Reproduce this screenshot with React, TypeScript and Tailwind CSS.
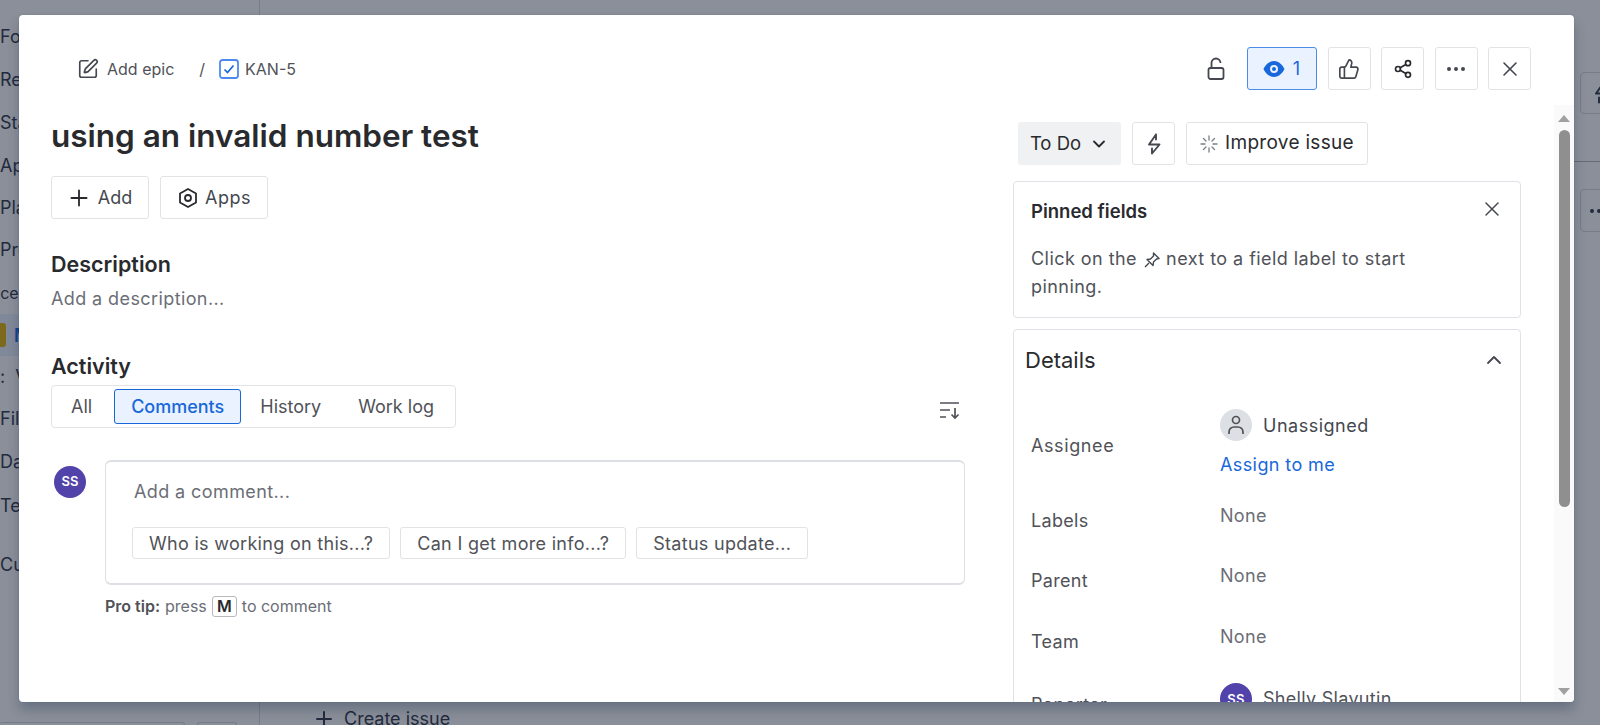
import { ChevronDown, ChevronUp, Ellipsis, Plus, Share2, SquarePen, ThumbsUp, X } from "lucide-react";
import type { ReactNode } from "react";

const sidebarItems = [
  { label: "For you", className: "mt-[15px] h-[43px]" },
  { label: "Recent", className: "h-[43px]" },
  { label: "Starred", className: "h-[43px]" },
  { label: "Apps", className: "h-[42px]" },
  { label: "Plans", className: "h-[42px]" },
  { label: "Projects", className: "h-[43px]" },
];

const sidebarLower = [
  { label: "Filters", className: "h-[44px]" },
  { label: "Dashboards", className: "h-[43px]" },
  { label: "Teams", className: "h-[44px] mb-[16px]" },
  { label: "Customize sidebar", className: "h-[42px]" },
];

const detailRows = [
  { label: "Labels", className: "h-[60px]" },
  { label: "Parent", className: "h-[61px]" },
  { label: "Team", className: "h-[62px]" },
];

function Bolt({ className }: { className: string }) {
  return (
    <svg className={className} width="24" height="24" viewBox="0 0 24 24" fill="none" stroke="currentColor" strokeWidth="1.9" strokeLinejoin="round" strokeLinecap="round">
      <path d="M14 2.500 7 12.500h10.500L10 21.500M14 2.500V7.500M10 21.500V16.500" />
    </svg>
  );
}

function IconButton({ children }: { children: ReactNode }) {
  return (
    <button className="flex h-[43px] w-[43px] items-center justify-center rounded-[3px] border border-[#e2e3e6] bg-white text-[#44474f]">
      {children}
    </button>
  );
}

function Chip({ label }: { label: string }) {
  return (
    <button className="flex h-[32px] items-center rounded-[3px] border border-[#e2e3e6] bg-white px-4 text-[18px] tracking-[0.3px] text-[#505258]">
      {label}
    </button>
  );
}

function Avatar({ className }: { className: string }) {
  return (
    <div className={`flex h-8 w-8 shrink-0 items-center justify-center rounded-full bg-[#5243aa] text-[13px] font-semibold text-white ${className}`}>
      SS
    </div>
  );
}

function PageBehind() {
  return (
    <div className="flex h-full bg-white text-[#2c3448]">
      <div className="flex w-[260px] shrink-0 flex-col overflow-hidden border-r border-[#d5d8de] text-[18px]">
        {sidebarItems.map((item) => (
          <div key={item.label} className={`flex items-center ${item.className}`}>
            {item.label}
          </div>
        ))}
        <div className="-ml-[29px] flex h-[43px] items-center text-[16px]">Spaces</div>
        <div className="flex h-[42px] items-center gap-2 bg-[#e9f2fe]">
          <div className="h-6 w-[6px] rounded-r-[3px] bg-[#e2b203]" />
          <span className="font-semibold text-[#0c66e4]">My project</span>
        </div>
        <div className="flex h-[40px] items-center gap-[10px]">
          <span>:</span>
          View all
        </div>
        {sidebarLower.map((item) => (
          <div key={item.label} className={`flex items-center ${item.className}`}>
            {item.label}
          </div>
        ))}
        <div className="mt-auto flex h-[3px] gap-3 pr-[22px]">
          <div className="w-[185px] rounded-t-[3px] border-t border-r border-[#d5d8de]" />
          <div className="grow rounded-t-[3px] border-x border-t border-[#d5d8de]" />
        </div>
      </div>
      <div className="flex grow flex-col items-end">
        <div className="mt-[72px] -mr-[22px] h-[42px] w-[42px] rounded-[4px] border border-[#d5d8de] pt-[8px] pl-[8px]">
          <Bolt className="h-6 w-6" />
        </div>
        <div className="mt-[47px] h-px w-[30px] bg-[#b0b4bd]" />
        <div className="mt-[27px] -mr-[22px] h-[43px] w-[42px] rounded-[4px] border border-[#d5d8de] pt-[9px] pl-[6px]">
          <Ellipsis className="h-6 w-6" />
        </div>
        <div className="mt-auto -mb-[8px] ml-[52px] flex h-[29px] items-center gap-2 self-start text-[18px] whitespace-nowrap text-[#2c3448]">
          <Plus className="h-6 w-6" />
          Create issue
        </div>
      </div>
    </div>
  );
}

function LeftColumn() {
  return (
    <div className="w-[946px] shrink-0 pl-8">
      <h1 className="mt-[25px] text-[31.5px] leading-[42px] font-semibold text-[#292a2e]">using an invalid number test</h1>
      <div className="mt-[19px] flex gap-[11px]">
        <button className="flex h-[43px] w-[98px] items-center justify-center gap-[6px] rounded-[3px] border border-[#e2e3e6] pr-[2px] text-[18px] text-[#44474f]">
          <Plus className="h-[26px] w-[26px] text-[#292a2e]" strokeWidth={1.7} />
          Add
        </button>
        <button className="flex h-[43px] w-[108px] items-center justify-center gap-[6px] rounded-[3px] border border-[#e2e3e6] text-[18px] tracking-[0.5px] text-[#44474f]">
          <svg width="22" height="22" viewBox="0 0 22 22" fill="none" stroke="#292a2e" strokeWidth="1.8">
            <path d="M11 2l8 4.500v9L11 20l-8-4.500v-9z" strokeLinejoin="round" />
            <circle cx="11" cy="11" r="3" />
          </svg>
          Apps
        </button>
      </div>
      <h2 className="mt-[31px] text-[21.500px] leading-7 font-semibold text-[#292a2e]">Description</h2>
      <p className="mt-[9px] text-[18px] leading-6 tracking-[0.4px] text-[#6b6e76]">Add a description...</p>
      <h2 className="mt-[41px] text-[21.500px] leading-7 font-semibold text-[#292a2e]">Activity</h2>
      <div className="flex items-center justify-between">
        <div className="mt-[5px] flex h-[43px] w-[405px] items-center gap-[4px] rounded-[4px] border border-[#e2e3e6] pl-[4px] text-[18px] text-[#505258]">
          <span className="pr-[18px] pl-[15px]">All</span>
          <span className="flex h-[35px] items-center rounded-[3px] border border-[#1868db] bg-[#e9f2fe] px-4 font-medium text-[#1868db]">Comments</span>
          <span className="px-[15px]">History</span>
          <span className="px-[18px]">Work log</span>
        </div>
        <svg className="mt-[14px] mr-[5px]" width="20" height="18" viewBox="0 0 20 18" fill="none" stroke="#505258" strokeWidth="1.700">
          <path d="M0 1h19M0 8h10M0 15h6M15 6v10M11.500 12.500 15 16l3.500-3.500" />
        </svg>
      </div>
      <div className="mt-[32px] flex">
        <Avatar className="mt-[6px] ml-[3px]" />
        <div className="ml-[19px] grow">
          <div className="h-[125px] rounded-[6px] border-x border-y-2 border-[#dcdfe4] pt-[18px] pl-[26px]">
            <p className="pl-[2px] text-[18px] leading-6 tracking-[0.4px] text-[#6b6e76]">Add a comment...</p>
            <div className="mt-[23px] flex gap-[10px]">
              <Chip label="Who is working on this...?" />
              <Chip label="Can I get more info...?" />
              <Chip label="Status update..." />
            </div>
          </div>
          <p className="mt-[9px] flex items-center text-[16px] text-[#6b6e76]">
            <span className="mr-[5px] font-semibold text-[#505258]">Pro tip:</span>
            press
            <span className="mx-[5px] flex h-[21px] w-[25px] items-center justify-center rounded-[3px] border border-[#b7b9be] font-semibold text-[#292a2e]">M</span>
            to comment
          </p>
        </div>
      </div>
    </div>
  );
}

function RightColumn() {
  return (
    <div className="ml-[48px] w-[508px] shrink-0">
      <div className="mt-[32px] flex pl-[5px]">
        <button className="flex h-[43px] w-[103px] items-center justify-center gap-2 rounded-[3px] bg-[#f0f1f2] text-[18.500px] text-[#292a2e]">
          To Do
          <ChevronDown className="h-5 w-5" strokeWidth={2.200} />
        </button>
        <button className="ml-[11px] flex h-[43px] w-[43px] items-center justify-center rounded-[3px] border border-[#e2e3e6] text-[#44474f]">
          <Bolt className="h-6 w-6" />
        </button>
        <button className="ml-[11px] flex h-[43px] w-[182px] items-center justify-center gap-[7px] rounded-[3px] border border-[#e2e3e6] text-[19px] tracking-[0.3px] text-[#292a2e]">
          <svg width="18" height="18" viewBox="0 0 18 18" stroke="#7a7d85" strokeWidth="1.300" strokeLinecap="round">
            <path d="M9 1v4M9 13v4M1 9h4M13 9h4M3.500 3.500l2.500 2.500M12 12l2.500 2.500M14.500 3.500 12 6M6 12l-2.500 2.500" />
          </svg>
          Improve issue
        </button>
      </div>
      <div className="mt-[16px] h-[137px] rounded-[4px] border border-[#dfe1e6] pt-[15px] pr-[16px] pl-[17px]">
        <div className="flex items-start justify-between">
          <h3 className="pt-[2px] text-[18.500px] leading-6 font-semibold text-[#292a2e]">Pinned fields</h3>
          <X className="h-6 w-6 text-[#44474f]" strokeWidth={1.500} />
        </div>
        <p className="mt-[22px] text-[18px] leading-[28px] tracking-[0.45px] text-[#505258]">
          Click on the{" "}
          <svg className="inline" width="18" height="18" viewBox="0 0 18 18" fill="none" stroke="#44474f" strokeWidth="1.400">
            <path d="M10.500 2 16 7.500l-2.500.5-3 3-.5 3.500-6-6L7.500 8l3-3zM6 12l-4 4" strokeLinejoin="round" />
          </svg>{" "}
          next to a field label to start
          <br />
          pinning.
        </p>
      </div>
      <div className="mt-[11px] rounded-[4px] border border-[#dfe1e6] pr-[14px] pl-[11px]">
        <div className="flex h-[60px] items-center justify-between">
          <h3 className="text-[22px] text-[#292a2e]">Details</h3>
          <ChevronUp className="h-6 w-6 text-[#44474f]" strokeWidth={1.800} />
        </div>
        <div className="flex h-[108px] pt-[19px] pl-[6px]">
          <div className="w-[189px] pt-[25px] text-[18px] leading-6 tracking-[0.6px] text-[#505258]">Assignee</div>
          <div>
            <div className="flex items-center gap-[11px] text-[18px] tracking-[0.5px] text-[#44474f]">
              <div className="flex h-8 w-8 items-center justify-center rounded-full bg-[#dcdfe4]">
                <svg width="18" height="20" viewBox="0 0 18 20" fill="none" stroke="#505258" strokeWidth="1.700">
                  <circle cx="9" cy="5" r="3.500" />
                  <path d="M2 19v-2a5 5 0 0 1 5-5h4a5 5 0 0 1 5 5v2" />
                </svg>
              </div>
              Unassigned
            </div>
            <div className="mt-[12px] text-[18px] leading-6 tracking-[0.4px] text-[#1868db]">Assign to me</div>
          </div>
        </div>
        {detailRows.map((row) => (
          <div key={row.label} className={`flex pl-[6px] text-[18px] leading-6 tracking-[0.3px] ${row.className}`}>
            <div className="w-[189px] pt-[11px] text-[#505258]">{row.label}</div>
            <div className="pt-[6px] text-[#6b6e76]">None</div>
          </div>
        ))}
        <div className="flex pl-[6px] text-[18px] leading-6 tracking-[0.3px]">
          <div className="w-[189px] pt-[12px] text-[#505258]">Reporter</div>
          <div className="flex items-center gap-[11px] text-[#505258]">
            <Avatar className="" />
            Shelly Slavutin
          </div>
        </div>
      </div>
    </div>
  );
}

export default function App() {
  return (
    <div className="relative h-[725px] w-[1600px] overflow-hidden font-['Inter',sans-serif]">
      <PageBehind />
      <div className="absolute inset-0 bg-[#171f33]/50" />
      <div className="absolute top-[15px] left-[19px] h-[687px] w-[1555px] overflow-hidden rounded-[4px] bg-white shadow-[0_8px_12px_rgba(9,30,66,0.25),0_0_1px_rgba(9,30,66,0.31)]">
        <div className="flex items-center justify-between pt-[32px] pr-[43px] pl-[58px]">
          <div className="flex items-center text-[16px] text-[#505258]">
            <SquarePen className="h-[22px] w-[22px] text-[#44474f]" strokeWidth={1.800} />
            <span className="ml-[8px]">Add epic</span>
            <span className="ml-[25px]">/</span>
            <svg className="ml-[14px]" width="20" height="20" viewBox="0 0 20 20" fill="none">
              <rect x="1" y="1" width="18" height="18" rx="2.500" stroke="#4c8af0" strokeWidth="1.800" />
              <path d="M5.500 10.500 8.500 13.500 14.500 6.500" stroke="#1868db" strokeWidth="1.700" />
            </svg>
            <span className="ml-[6px]">KAN-5</span>
          </div>
          <div className="flex items-center text-[#44474f]">
            <svg className="mr-[22px]" width="18" height="23" viewBox="0 0 18 23" fill="none" stroke="currentColor" strokeWidth="1.800">
              <rect x="1.500" y="11" width="15" height="11" rx="2" />
              <path d="M4.500 11V6a4.500 4.500 0 0 1 9 0" />
            </svg>
            <button className="mr-[11px] flex h-[43px] w-[70px] items-center justify-center gap-[8px] rounded-[3px] border border-[#4a8ce8] bg-[#e9f2fe] text-[18px] text-[#1868db]">
              <svg width="22" height="16" viewBox="0 0 22 16">
                <path fill="#1868db" fillRule="evenodd" d="M11 0c5 0 9 4.500 10.500 8C20 11.500 16 16 11 16S2 11.500.5 8C2 4.500 6 0 11 0zm0 4a4 4 0 1 0 0 8 4 4 0 0 0 0-8zm0 2a2 2 0 1 1 0 4 2 2 0 0 1 0-4z" />
              </svg>
              1
            </button>
            <div className="flex gap-[10.500px]">
              <IconButton>
                <ThumbsUp className="h-[22px] w-[22px]" strokeWidth={1.800} />
              </IconButton>
              <IconButton>
                <Share2 className="h-5 w-5 text-[#292a2e]" strokeWidth={2} />
              </IconButton>
              <IconButton>
                <Ellipsis className="h-6 w-6" strokeWidth={2} />
              </IconButton>
              <IconButton>
                <X className="h-6 w-6" strokeWidth={1.600} />
              </IconButton>
            </div>
          </div>
        </div>
        <div className="flex">
          <LeftColumn />
          <RightColumn />
        </div>
        <div className="absolute top-[90px] right-0 bottom-0 flex w-[20px] flex-col items-center bg-[#fafafa] pt-[10px]">
          <div className="h-0 w-0 border-x-[6px] border-b-[7px] border-x-transparent border-b-[#a0a0a0]" />
          <div className="mt-[8px] h-[377px] w-[11px] rounded-full bg-[#8f8f8f]" />
          <div className="mt-auto mb-[7px] h-0 w-0 border-x-[6px] border-t-[7px] border-x-transparent border-t-[#a0a0a0]" />
        </div>
      </div>
    </div>
  );
}
